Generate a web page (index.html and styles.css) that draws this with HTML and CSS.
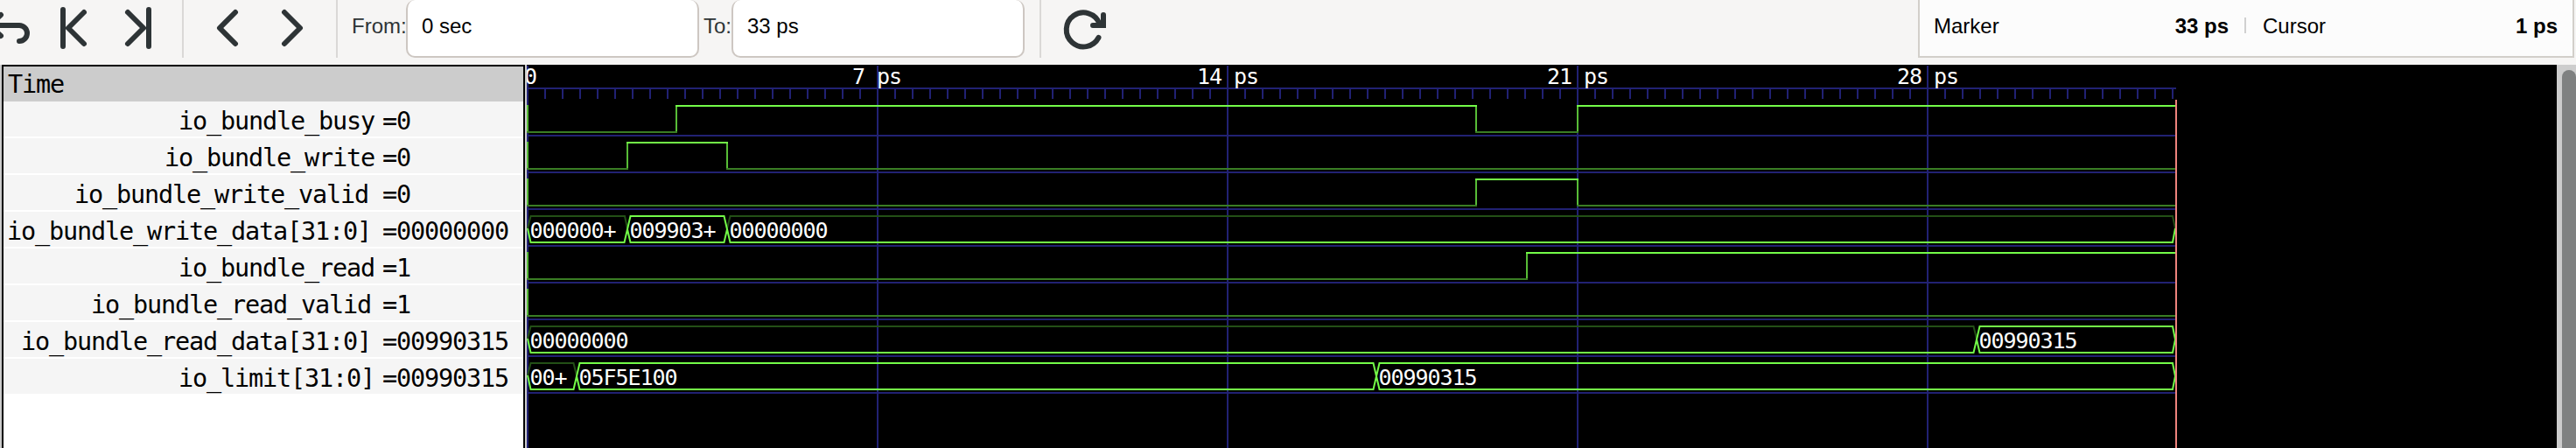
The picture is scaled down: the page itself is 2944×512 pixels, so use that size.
FILE: index.html
```html
<!DOCTYPE html>
<html lang="en">
<head>
<meta charset="utf-8">
<title>Waveform viewer</title>
<link rel="stylesheet" href="styles.css">
</head>
<body>
<header class="toolbar">
  <svg class="nav" width="208" height="74" viewBox="0 0 208 74">
    <path d="M1 17L-12 29L1 41"/>
    <path d="M-6 29H22A9 9 0 0 1 22 47"/>
    <path d="M72 11V53M96 14L78 32L96 50"/>
    <path d="M146 14L164 32L146 50M170 11V53"/>
  </svg>
  <span class="divider"></span>
  <svg class="step" width="174" height="74" viewBox="210 0 174 74">
    <path d="M269 14L251 32L269 50M325 14L343 32L325 50"/>
  </svg>
  <span class="divider"></span>
  <label class="caption from">From:</label>
  <div class="entry first">0 sec</div>
  <label class="caption to">To:</label>
  <div class="entry">33 ps</div>
  <span class="divider after-entry"></span>
  <svg class="reload" width="84" height="74" viewBox="1190 0 84 74">
    <path d="M1255.500 43A19.500 19.500 0 1 1 1256.500 27"/>
    <path class="head" d="M1249 29H1261V17"/>
  </svg>
  <div class="status">
    <span class="key">Marker</span><b class="marker-value">33 ps</b>
    <span class="bar"></span>
    <span class="key">Cursor</span><b class="cursor-value">1 ps</b>
  </div>
</header>
<main class="viewer">
  <section class="signals">
    <div class="head-row">Time</div>
    <div class="row"><span class="name n0">io_bundle_busy</span><span>=0</span></div>
    <div class="row"><span class="name n0">io_bundle_write</span><span>=0</span></div>
    <div class="row"><span class="name n3">io_bundle_write_valid</span><span>=0</span></div>
    <div class="row"><span class="name n2">io_bundle_write_data[31:0]</span><span>=00000000</span></div>
    <div class="row"><span class="name n0">io_bundle_read</span><span>=1</span></div>
    <div class="row"><span class="name n2">io_bundle_read_valid</span><span>=1</span></div>
    <div class="row"><span class="name n2">io_bundle_read_data[31:0]</span><span>=00990315</span></div>
    <div class="row"><span class="name n0">io_limit[31:0]</span><span>=00990315</span></div>
  </section>
  <svg class="waves" width="2320" height="438" viewBox="602 74 2320 438">
    <g class="grid">
      <path d="M603 75V512M1003 75V512M1403 75V512M1803 75V512M2203 75V512M604 101H2487"/>
      <path d="M604 155H2486M604 197H2486M604 239H2486M604 281H2486M604 323H2486M604 365H2486M604 407H2486M604 449H2486"/>
      <line class="ticks" x1="602" y1="107.500" x2="2486" y2="107.500"/>
    </g>
    <g class="low">
      <path d="M602 151H774M1686 151H1804"/>
      <path d="M602 193H718M830 193H2486"/>
      <path d="M602 235H1688M1802 235H2486"/>
      <path d="M602 319H1746"/>
      <path d="M602 361H2486"/>
    </g>
    <path class="edge" d="M603 120V150M773 120V150M1687 120V150M1803 120V150M603 162V192M717 162V192M831 162V192M603 204V234M1687 204V234M1803 204V234M603 288V318M1745 288V318M603 330V360"/>
    <path class="high" d="M772 121H1688M1802 121H2486M716 163H832M1686 205H1804M1744 289H2486"/>
    <g class="zero">
      <path d="M603 261L606.500 247H714L717 261M831 261L834.500 247H2483L2486 261"/>
      <path d="M603 387L606.500 373H2255.500L2259 387"/>
      <path d="M603 429L606.500 415H655.500L659 429"/>
    </g>
    <g class="bus">
      <path d="M603 261L606.500 277H713.500L717 262L720.500 247H827.500L831 262L834.500 277H2483L2486 261"/>
      <path d="M717 262L720.500 277H827.500L831 262"/>
      <path d="M603 387L606.500 403H2255.500L2259 388L2262.500 373H2483L2486 388L2483 403H2262.500L2259 388"/>
      <path d="M603 429L606.500 445H655.500L659 430L662.500 415H1569.500L1573 430L1576.500 445H2483L2486 430L2483 415H1576.500L1573 430L1569.500 445H662.500L659 430"/>
    </g>
    <path class="marker" d="M2487 114V512"/>
    <g class="text">
      <text x="599" y="96">0</text>
      <text x="974" y="96" xml:space="preserve">7 ps</text>
      <text x="1368" y="96" xml:space="preserve">14 ps</text>
      <text x="1768" y="96" xml:space="preserve">21 ps</text>
      <text x="2168" y="96" xml:space="preserve">28 ps</text>
      <text x="605.500" y="272">000000+</text>
      <text x="719.500" y="272">009903+</text>
      <text x="833.500" y="272">00000000</text>
      <text x="605.500" y="398">00000000</text>
      <text x="2261.500" y="398">00990315</text>
      <text x="605.500" y="440">00+</text>
      <text x="661.500" y="440">05F5E100</text>
      <text x="1575.500" y="440">00990315</text>
    </g>
  </svg>
  <div class="scrollbar"><div class="thumb"></div></div>
</main>
</body>
</html>
```
FILE: styles.css
```css
* { box-sizing: border-box; }
body {
  margin: 0;
  width: 2944px;
  height: 512px;
  overflow: hidden;
  background: #f6f5f4;
  font-family: "Liberation Sans", Arial, sans-serif;
}
svg { display: block; flex: none; }

.toolbar {
  display: flex;
  align-items: flex-start;
  height: 74px;
  font-size: 24px;
  line-height: 28px;
  color: #000;
}
.toolbar svg path {
  fill: none;
  stroke: #2e3436;
  stroke-width: 6;
  stroke-linecap: round;
  stroke-linejoin: round;
}
.toolbar svg .head { stroke-linejoin: miter; }
.divider { flex: none; width: 2px; height: 66px; background: #dad8d6; }
.caption { flex: none; padding-top: 16px; color: #2e3436; }
.from { width: 78px; padding-left: 16px; }
.to { width: 37px; padding-left: 5px; }
.entry {
  flex: none;
  width: 335px;
  height: 66px;
  padding: 16px 0 0 16px;
  background: #fff;
  border: 2px solid #cdc7c2;
  border-top: 0;
  border-radius: 10px;
}
.after-entry { margin-left: 17px; }
.status {
  display: flex;
  flex: none;
  width: 750px;
  height: 66px;
  margin: 0 2px 0 auto;
  padding: 16px 17px 0 16px;
  background: #fcfcfc;
  border: 2px solid #d2cfca;
  border-top: 0;
}
.marker-value { width: 262px; text-align: right; }
.key { width: 75px; }
.bar { width: 2px; height: 18px; margin: 4px 19px 0 18px; background: #d0d0d0; }
.cursor-value { margin-left: auto; }

.viewer { display: flex; height: 438px; background: #ccc; }
.signals {
  flex: none;
  width: 598px;
  margin: 0 2px;
  border: 2px solid #000;
  border-bottom: 0;
  background: #fff;
  font: 28.5px/40px "DejaVu Sans Mono", monospace;
  letter-spacing: -1.16px;
  color: #000;
}
.head-row { height: 40px; padding: 1px 0 0 5px; background: #ccc; }
.row { display: flex; height: 40px; margin-bottom: 2px; padding-top: 3px; background: #f5f5f5; white-space: pre; }
.name { width: 433px; text-align: right; }
.n0 { padding-right: 9px; }
.n2 { padding-right: 13px; }
.n3 { padding-right: 16px; }

.waves { background: #000; }
.waves path, .waves line { fill: none; stroke-width: 2; }
.grid { stroke: #212173; }
.waves .ticks { stroke-width: 11; stroke-dasharray: 2 18; }
.low { stroke: #3a7d24; }
.edge { stroke: #57bc37; }
.high, .bus { stroke: #73fb48; }
.zero { stroke: #234f16; }
.marker { stroke: #ee837c; }
.text { font: 25px "DejaVu Sans Mono", monospace; letter-spacing: -1.05px; fill: #fff; }

.scrollbar { flex: 1; padding: 6px 0 0 6px; background: #cdcdcd; }
.thumb { height: 432px; background: #7f8181; border-radius: 8px 8px 0 0; }
```
